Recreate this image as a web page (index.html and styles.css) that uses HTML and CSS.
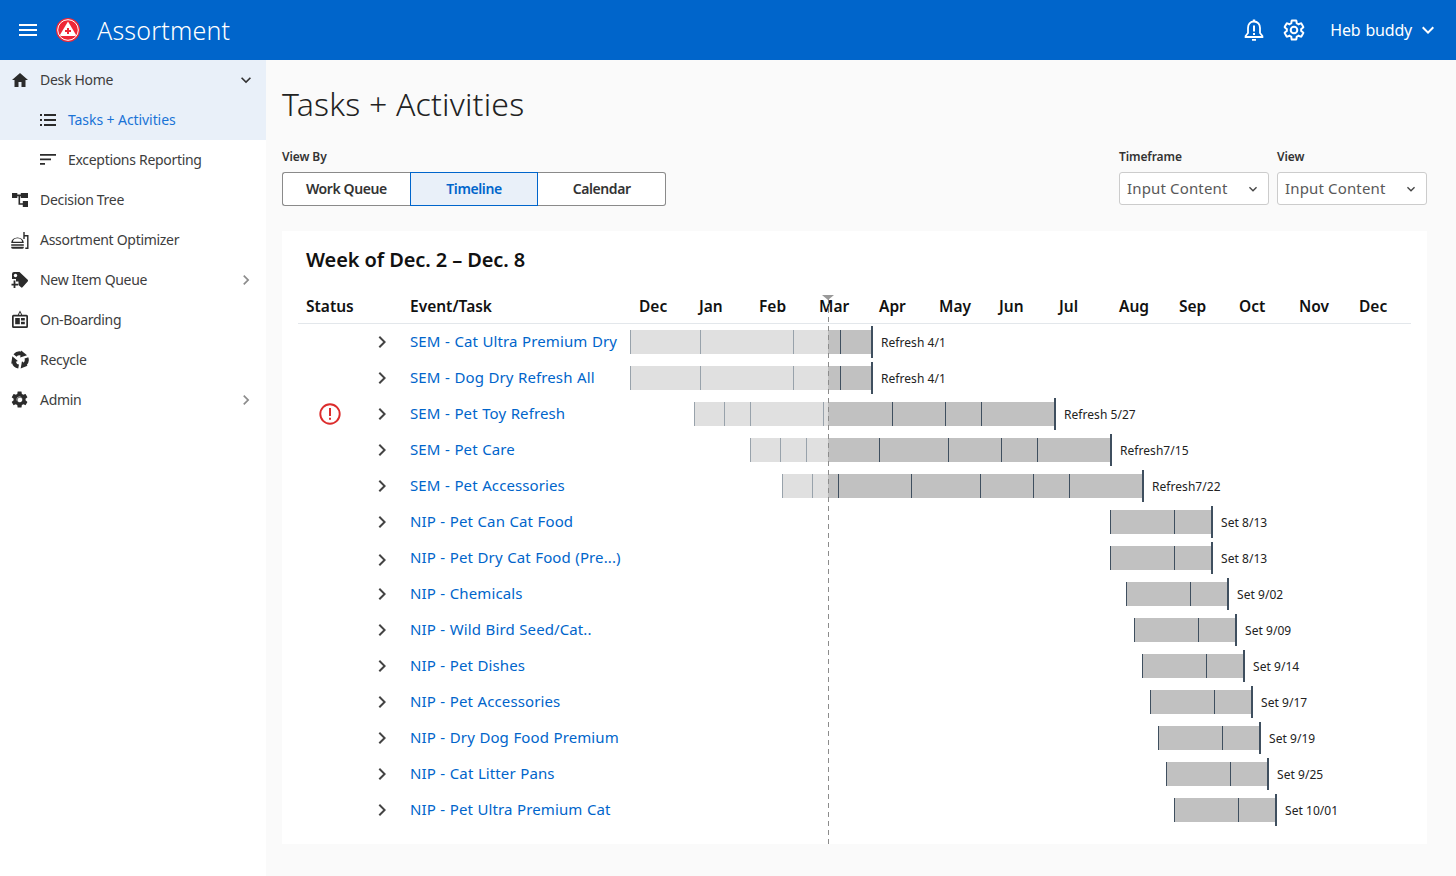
FILE: index.html
```html
<!DOCTYPE html>
<html>
<head>
  <title>Assortment</title>
  <link rel="stylesheet" href="styles.css">
</head>
<body>
  <svg class="defs" width="0" height="0">
    <symbol id="chev-right" viewBox="0 0 24 24"><path d="M10 6L8.59 7.41 13.17 12l-4.58 4.59L10 18l6-6z"/></symbol>
    <symbol id="chev-down" viewBox="0 0 24 24"><path d="M16.59 8.59L12 13.17 7.41 8.59 6 10l6 6 6-6z"/></symbol>
    <symbol id="cog" viewBox="0 0 24 24"><path d="M19.14 12.94c.04-.3.06-.61.06-.94 0-.32-.02-.64-.07-.94l2.03-1.58c.18-.14.23-.41.12-.61l-1.92-3.32c-.12-.22-.37-.29-.59-.22l-2.39.96c-.5-.38-1.03-.7-1.62-.94l-.36-2.54c-.04-.24-.24-.41-.48-.41h-3.84c-.24 0-.43.17-.47.41l-.36 2.54c-.59.24-1.13.57-1.62.94l-2.39-.96c-.22-.08-.47 0-.59.22L2.74 8.87c-.12.21-.08.47.12.61l2.03 1.58c-.05.3-.09.63-.09.94s.02.64.07.94l-2.03 1.58c-.18.14-.23.41-.12.61l1.92 3.32c.12.22.37.29.59.22l2.39-.96c.5.38 1.03.7 1.62.94l.36 2.54c.05.24.24.41.48.41h3.84c.24 0 .44-.17.47-.41l.36-2.54c.59-.24 1.13-.56 1.62-.94l2.39.96c.22.08.47 0 .59-.22l1.92-3.32c.12-.22.07-.47-.12-.61l-2.01-1.58zM12 15.6c-1.98 0-3.6-1.62-3.6-3.6s1.62-3.6 3.6-3.6 3.6 1.62 3.6 3.6-1.62 3.6-3.6 3.6z"/></symbol>
  </svg>

  <header class="topbar">
    <svg class="menu-icon" viewBox="0 0 18 12"><path d="M0 0h18v2H0zM0 5h18v2H0zM0 10h18v2H0z"/></svg>
    <svg class="logo" viewBox="0 0 24 24">
      <circle cx="12" cy="12" r="12" fill="#ee2737"/>
      <circle cx="12" cy="12" r="10.300" fill="none" stroke="#fff" stroke-width="1"/>
      <path d="M12 3.500L19.800 16.500Q20.300 18 18.800 18H5.200Q3.700 18 4.200 16.500z" fill="#fff"/>
      <path d="M11 10h2v2h2v2h-2v2h-2v-2H9v-2h2z" fill="#ee2737"/>
    </svg>
    <span class="app-name">Assortment</span>
    <div class="topbar-right">
      <svg class="bell" viewBox="0 0 20 24">
        <path d="M10 3.500c-3.800 0-6 3-6 6.500v5L1.600 18v1h16.800v-1L16 15v-5c0-3.500-2.200-6.500-6-6.500z" fill="none" stroke="#fff" stroke-width="1.800"/>
        <path d="M8.800 1.500h2.400v2.500H8.800zM9 7.500h2v6H9zM9 15h2v2H9zM8 21h4v1.800H8z" fill="#fff"/>
      </svg>
      <svg class="gear" viewBox="0 0 24 24">
        <path d="M19.140 12.940c.04-.3.060-.61.060-.94 0-.32-.02-.64-.07-.94l2.030-1.580c.18-.14.23-.41.12-.61l-1.920-3.320c-.12-.22-.37-.29-.59-.22l-2.390.96c-.5-.38-1.030-.7-1.620-.94l-.36-2.540c-.04-.24-.24-.41-.48-.41h-3.840c-.24 0-.43.17-.47.41l-.36 2.540c-.59.24-1.130.57-1.620.94l-2.390-.96c-.22-.08-.47 0-.59.22L2.740 8.870c-.12.21-.08.47.12.61l2.030 1.580c-.05.3-.09.63-.09.94s.02.64.07.94l-2.030 1.580c-.18.14-.23.41-.12.61l1.920 3.320c.12.22.37.29.59.22l2.390-.96c.5.38 1.030.7 1.620.94l.36 2.540c.05.24.24.41.48.41h3.840c.24 0 .44-.17.47-.41l.36-2.540c.59-.24 1.130-.56 1.620-.94l2.390.96c.22.08.47 0 .59-.22l1.920-3.320c.12-.22.07-.47-.12-.61z" fill="none" stroke="#fff" stroke-width="2"/>
        <circle cx="12" cy="12" r="3.300" fill="none" stroke="#fff" stroke-width="2"/>
      </svg>
      <span class="user-name">Heb buddy</span>
      <svg class="user-chev"><use href="#chev-down"/></svg>
    </div>
  </header>

  <div class="layout">
    <nav class="sidebar">
      <div class="nav-item open">
        <svg class="nav-icon" viewBox="0 0 20 20"><path d="M8.500 17v-5h3v5h4v-7H18L10 3 2 10h2.500v7z"/></svg>
        <span>Desk Home</span>
        <svg class="nav-chev dark"><use href="#chev-down"/></svg>
      </div>
      <div class="nav-item sub active">
        <svg class="nav-icon" viewBox="0 0 16 12"><path d="M0 0h2v2H0zM4 0h12v2H4zM0 5h2v2H0zM4 5h12v2H4zM0 10h2v2H0zM4 10h12v2H4z"/></svg>
        <span>Tasks + Activities</span>
      </div>
      <div class="nav-item sub">
        <svg class="nav-icon" viewBox="0 0 16 12"><path d="M0 0h16v1.700H0zM0 4.500h11v1.700H0zM0 9h5v1.700H0z"/></svg>
        <span>Exceptions Reporting</span>
      </div>
      <div class="nav-item">
        <svg class="nav-icon" viewBox="0 0 20 20"><path d="M2 3h5.300v5H2zM10.800 3H18v5h-7.200zM12.800 11H18v6h-5.200zM7 4.600h4v1.600H7zM8.500 5h1.600v8.200h3v1.600H8.500z"/></svg>
        <span>Decision Tree</span>
      </div>
      <div class="nav-item">
        <svg class="nav-icon" viewBox="0 0 20 20">
          <path d="M1.200 13a6.300 5.500 0 0 1 12.600 0zM1.200 14.300h12.600v1.400H1.200zM1.200 16.800h12.600a1.600 1.600 0 0 1-1.600 2H2.800a1.600 1.600 0 0 1-1.600-2z"/>
          <path d="M13.300 2h1.400v3H18.500v14h-3.200v-1.400h1.800V6.400h-2.400V9h-1.400z"/>
          <path d="M3 11.700a4.500 3.500 0 0 1 9 0z" fill="#fff"/>
        </svg>
        <span>Assortment Optimizer</span>
      </div>
      <div class="nav-item">
        <svg class="nav-icon" viewBox="0 0 20 20">
          <path d="M2 4Q2 2 4 2H9.500L17.700 9.800Q18.400 10.600 17.700 11.400L12.500 17.300Q11.800 18 11 17.300L8.500 15V11.500H6V9H2z"/>
          <circle cx="5.500" cy="5.500" r="1.700" fill="#fff"/>
          <path d="M3.600 10.500h1.800v3.200h2.800v1.800H5.400V18H3.600v-2.500H1.500v-1.800h2.100z"/>
        </svg>
        <span>New Item Queue</span>
        <svg class="nav-chev"><use href="#chev-right"/></svg>
      </div>
      <div class="nav-item">
        <svg class="nav-icon" viewBox="0 0 20 20">
          <path d="M3.500 4.800h4.300L10 .5l2.200 4.300h4.300A1.500 1.500 0 0 1 18 6.300v10.200a1.500 1.500 0 0 1-1.500 1.500h-13A1.500 1.500 0 0 1 2 16.500V6.300a1.500 1.500 0 0 1 1.500-1.500zM3.700 6.500v9.800h12.600V6.500zM8.800 4.800h2.400L10 2.600z" fill-rule="evenodd"/>
          <path d="M5.200 8h4.600v6.300H5.200zM11 8h3.800v2.600H11zM11 11.800h3.800v2.500H11z"/>
        </svg>
        <span>On-Boarding</span>
      </div>
      <div class="nav-item">
        <svg class="nav-icon recycle" viewBox="0 0 20 20">
          <g id="arrow">
            <path d="M5 5.500A6 6 0 0 1 11.500 3.700" fill="none" stroke="#2b2b2b" stroke-width="4"/>
            <path d="M11.200 .6L17 5.200 10.200 7.600z"/>
          </g>
          <use href="#arrow" transform="rotate(120 10 10)"/>
          <use href="#arrow" transform="rotate(240 10 10)"/>
        </svg>
        <span>Recycle</span>
      </div>
      <div class="nav-item">
        <svg class="nav-icon" viewBox="0.500 0.500 23 23">
          <use href="#cog"/>
          <circle cx="12" cy="12" r="3.300" fill="none" stroke="#2b2b2b" stroke-width="0.800"/>
        </svg>
        <span>Admin</span>
        <svg class="nav-chev"><use href="#chev-right"/></svg>
      </div>
    </nav>

    <main class="main">
      <h1 class="page-title">Tasks + Activities</h1>

      <div class="controls">
        <div class="field">
          <label class="field-label">View By</label>
          <div class="segmented">
            <button class="seg-btn">Work Queue</button>
            <button class="seg-btn selected">Timeline</button>
            <button class="seg-btn">Calendar</button>
          </div>
        </div>
        <div class="filters">
          <div class="field">
            <label class="field-label">Timeframe</label>
            <div class="select"><span>Input Content</span><svg class="select-chev"><use href="#chev-down"/></svg></div>
          </div>
          <div class="field">
            <label class="field-label">View</label>
            <div class="select"><span>Input Content</span><svg class="select-chev"><use href="#chev-down"/></svg></div>
          </div>
        </div>
      </div>

      <section class="card">
        <h2 class="week">Week of Dec. 2 – Dec. 8</h2>
        <div class="today"></div>

        <div class="row head">
          <div class="status-head">Status</div>
          <div class="name">Event/Task</div>
          <div class="months">
            <span>Dec</span><span>Jan</span><span>Feb</span><span>Mar</span><span>Apr</span><span>May</span><span>Jun</span><span>Jul</span><span>Aug</span><span>Sep</span><span>Oct</span><span>Nov</span><span>Dec</span>
          </div>
        </div>

        <div class="row">
          <div></div>
          <svg class="expand"><use href="#chev-right"/></svg>
          <a class="name">SEM - Cat Ultra Premium Dry</a>
          <div class="track">
            <div class="bar" style="margin-left:0">
              <i class="past" style="width:70px"></i><i class="past" style="width:93px"></i><i class="past" style="width:35px"></i><i class="now" style="width:12px"></i><i style="width:31px"></i>
            </div>
            <b class="end"></b><span class="tag">Refresh 4/1</span>
          </div>
        </div>
        <div class="row">
          <div></div>
          <svg class="expand"><use href="#chev-right"/></svg>
          <a class="name">SEM - Dog Dry Refresh All</a>
          <div class="track">
            <div class="bar" style="margin-left:0">
              <i class="past" style="width:70px"></i><i class="past" style="width:93px"></i><i class="past" style="width:35px"></i><i class="now" style="width:12px"></i><i style="width:31px"></i>
            </div>
            <b class="end"></b><span class="tag">Refresh 4/1</span>
          </div>
        </div>
        <div class="row">
          <svg class="alert" viewBox="0 0 22 22">
            <circle cx="11" cy="11" r="9.700" fill="none" stroke="#dc2c2c" stroke-width="1.900"/>
            <path d="M10 5h2v8h-2zM10 14.700h2v2h-2z" fill="#dc2c2c"/>
          </svg>
          <svg class="expand"><use href="#chev-right"/></svg>
          <a class="name">SEM - Pet Toy Refresh</a>
          <div class="track">
            <div class="bar" style="margin-left:64px">
              <i class="past" style="width:30px"></i><i class="past" style="width:26px"></i><i class="past" style="width:73px"></i><i class="past" style="width:5px"></i><i class="now" style="width:64px"></i><i style="width:53px"></i><i style="width:36px"></i><i style="width:73px"></i>
            </div>
            <b class="end"></b><span class="tag">Refresh 5/27</span>
          </div>
        </div>
        <div class="row">
          <div></div>
          <svg class="expand"><use href="#chev-right"/></svg>
          <a class="name">SEM - Pet Care</a>
          <div class="track">
            <div class="bar" style="margin-left:120px">
              <i class="past" style="width:30px"></i><i class="past" style="width:26px"></i><i class="past" style="width:22px"></i><i class="now" style="width:51px"></i><i style="width:69px"></i><i style="width:53px"></i><i style="width:36px"></i><i style="width:73px"></i>
            </div>
            <b class="end"></b><span class="tag">Refresh7/15</span>
          </div>
        </div>
        <div class="row">
          <div></div>
          <svg class="expand"><use href="#chev-right"/></svg>
          <a class="name">SEM - Pet Accessories</a>
          <div class="track">
            <div class="bar" style="margin-left:152px">
              <i class="past" style="width:30px"></i><i class="past" style="width:16px"></i><i class="now" style="width:10px"></i><i style="width:73px"></i><i style="width:69px"></i><i style="width:53px"></i><i style="width:36px"></i><i style="width:73px"></i>
            </div>
            <b class="end"></b><span class="tag">Refresh7/22</span>
          </div>
        </div>
        <div class="row">
          <div></div>
          <svg class="expand"><use href="#chev-right"/></svg>
          <a class="name">NIP - Pet Can Cat Food</a>
          <div class="track">
            <div class="bar" style="margin-left:480px"><i style="width:64px"></i><i style="width:37px"></i></div>
            <b class="end"></b><span class="tag">Set 8/13</span>
          </div>
        </div>
        <div class="row">
          <div></div>
          <svg class="expand low"><use href="#chev-right"/></svg>
          <a class="name">NIP - Pet Dry Cat Food (Pre...)</a>
          <div class="track">
            <div class="bar" style="margin-left:480px"><i style="width:64px"></i><i style="width:37px"></i></div>
            <b class="end"></b><span class="tag">Set 8/13</span>
          </div>
        </div>
        <div class="row">
          <div></div>
          <svg class="expand"><use href="#chev-right"/></svg>
          <a class="name">NIP - Chemicals</a>
          <div class="track">
            <div class="bar" style="margin-left:496px"><i style="width:64px"></i><i style="width:37px"></i></div>
            <b class="end"></b><span class="tag">Set 9/02</span>
          </div>
        </div>
        <div class="row">
          <div></div>
          <svg class="expand"><use href="#chev-right"/></svg>
          <a class="name">NIP - Wild Bird Seed/Cat..</a>
          <div class="track">
            <div class="bar" style="margin-left:504px"><i style="width:64px"></i><i style="width:37px"></i></div>
            <b class="end"></b><span class="tag">Set 9/09</span>
          </div>
        </div>
        <div class="row">
          <div></div>
          <svg class="expand"><use href="#chev-right"/></svg>
          <a class="name">NIP - Pet Dishes</a>
          <div class="track">
            <div class="bar" style="margin-left:512px"><i style="width:64px"></i><i style="width:37px"></i></div>
            <b class="end"></b><span class="tag">Set 9/14</span>
          </div>
        </div>
        <div class="row">
          <div></div>
          <svg class="expand"><use href="#chev-right"/></svg>
          <a class="name">NIP - Pet Accessories</a>
          <div class="track">
            <div class="bar" style="margin-left:520px"><i style="width:64px"></i><i style="width:37px"></i></div>
            <b class="end"></b><span class="tag">Set 9/17</span>
          </div>
        </div>
        <div class="row">
          <div></div>
          <svg class="expand"><use href="#chev-right"/></svg>
          <a class="name">NIP - Dry Dog Food Premium</a>
          <div class="track">
            <div class="bar" style="margin-left:528px"><i style="width:64px"></i><i style="width:37px"></i></div>
            <b class="end"></b><span class="tag">Set 9/19</span>
          </div>
        </div>
        <div class="row">
          <div></div>
          <svg class="expand"><use href="#chev-right"/></svg>
          <a class="name">NIP - Cat Litter Pans</a>
          <div class="track">
            <div class="bar" style="margin-left:536px"><i style="width:64px"></i><i style="width:37px"></i></div>
            <b class="end"></b><span class="tag">Set 9/25</span>
          </div>
        </div>
        <div class="row">
          <div></div>
          <svg class="expand"><use href="#chev-right"/></svg>
          <a class="name">NIP - Pet Ultra Premium Cat</a>
          <div class="track">
            <div class="bar" style="margin-left:544px"><i style="width:64px"></i><i style="width:37px"></i></div>
            <b class="end"></b><span class="tag">Set 10/01</span>
          </div>
        </div>
      </section>
    </main>
  </div>
</body>
</html>
```

FILE: styles.css
```css
* {
  box-sizing: border-box;
}
body {
  margin: 0;
  font-family: "Noto Sans", Arial, sans-serif;
  color: #333;
  background-color: #fafafa;
}
.defs {
  position: absolute;
}

/* top bar */
.topbar {
  height: 60px;
  background-color: #0065cb;
  display: flex;
  align-items: center;
  padding-left: 19px;
  color: #fff;
}
.menu-icon {
  width: 18px;
  height: 12px;
  fill: #fff;
}
.logo {
  width: 24px;
  height: 24px;
  margin-left: 19px;
}
.app-name {
  margin-left: 17px;
  font-size: 25px;
  font-weight: 300;
  letter-spacing: 0.2px;
}
.topbar-right {
  margin-left: auto;
  display: flex;
  align-items: center;
}
.bell {
  width: 20px;
  height: 24px;
}
.gear {
  width: 24px;
  height: 24px;
  margin-left: 18px;
}
.user-name {
  margin-left: 24px;
  font-size: 16px;
  letter-spacing: -0.2px;
  word-spacing: 1px;
}
.user-chev {
  width: 24px;
  height: 24px;
  margin: 0 16px 0 4px;
  fill: #fff;
}

/* side nav */
.layout {
  display: flex;
}
.sidebar {
  width: 266px;
  flex-shrink: 0;
  min-height: 816px;
  background-color: #fff;
}
.nav-item {
  height: 40px;
  display: flex;
  align-items: center;
  padding-left: 10px;
  font-size: 14px;
  letter-spacing: -0.3px;
  color: #3d3d3d;
}
.nav-item span {
  margin-top: -2px;
}
.nav-item.open,
.nav-item.active {
  background-color: #e9f0f9;
}
.nav-item.active {
  color: #1a73d6;
  letter-spacing: -0.08px;
}
.nav-icon {
  width: 20px;
  height: 20px;
  margin-right: 10px;
  fill: #2b2b2b;
}
.nav-item.sub {
  padding-left: 40px;
}
.nav-item.sub .nav-icon {
  width: 16px;
  height: 12px;
  margin-right: 12px;
}
.nav-chev {
  width: 20px;
  height: 20px;
  margin-left: auto;
  margin-right: 10px;
  fill: #8c8c8c;
}
.nav-chev.dark {
  fill: #333;
}

/* main area */
.main {
  flex: 1;
  padding: 25px 29px 32px 16px;
}
.page-title {
  margin: 0;
  font-size: 32px;
  line-height: 38px;
  font-weight: 300;
  letter-spacing: 0.2px;
  color: #222;
}
.controls {
  display: flex;
  justify-content: space-between;
  margin-top: 26px;
}
.filters {
  display: flex;
  gap: 8px;
}
.field-label {
  display: block;
  font-size: 12px;
  line-height: 16px;
  font-weight: 600;
  letter-spacing: -0.1px;
  color: #333;
  margin-bottom: 7px;
}
.segmented {
  display: flex;
  width: 384px;
  height: 34px;
}
.seg-btn {
  flex: 1;
  font-family: inherit;
  font-size: 14px;
  font-weight: 600;
  letter-spacing: -0.4px;
  color: #333;
  background-color: #fff;
  border: 1px solid #8a8a8a;
  padding: 0 0 2px;
}
.seg-btn:first-child {
  border-radius: 3px 0 0 3px;
  border-right: none;
}
.seg-btn:last-child {
  border-radius: 0 3px 3px 0;
  border-left: none;
}
.seg-btn.selected {
  background-color: #e9f0f9;
  color: #0065cb;
  border-color: #0065cb;
}
.select {
  width: 150px;
  height: 33px;
  display: flex;
  align-items: center;
  justify-content: space-between;
  padding: 0 7px;
  font-size: 15px;
  letter-spacing: 0.15px;
  color: #595959;
  background-color: #fff;
  border: 1px solid #ccc;
  border-radius: 3px;
}
.select span {
  margin-top: -2px;
}
.select-chev {
  width: 16px;
  height: 16px;
  fill: #444;
}

/* timeline card */
.card {
  position: relative;
  margin-top: 25px;
  padding: 15px 16px 16px;
  background-color: #fff;
}
.week {
  margin: 0 0 15px 8px;
  font-size: 20px;
  line-height: 28px;
  font-weight: 600;
  letter-spacing: -0.1px;
  color: #111;
}
.today {
  position: absolute;
  left: 546px;
  top: 68px;
  bottom: 0;
  width: 1px;
  background-image: repeating-linear-gradient(#8c8c8c 0 5px, transparent 5px 9px);
}
.today::before {
  content: "";
  position: absolute;
  left: -6px;
  top: -4px;
  border-left: 6px solid transparent;
  border-right: 6px solid transparent;
  border-top: 5px solid #999;
}
.row {
  display: grid;
  grid-template-columns: 72px 40px 220px 1fr;
  align-items: center;
  height: 36px;
}
.row.head {
  height: 35px;
  padding-bottom: 1px;
  border-bottom: 1px solid #e3e7eb;
  font-size: 15.5px;
  font-weight: 600;
  color: #111;
}
.status-head {
  grid-column: 1 / 3;
  padding-left: 8px;
}
.months {
  display: flex;
}
.months span {
  width: 60px;
  padding-left: 9px;
}
.name {
  white-space: nowrap;
}
a.name {
  margin-top: -2px;
  font-size: 15px;
  letter-spacing: 0.1px;
  word-spacing: 0.5px;
  color: #0065cb;
}
.alert {
  width: 22px;
  height: 22px;
  margin-left: 21px;
}
.expand {
  width: 24px;
  height: 24px;
  fill: #444;
}
.expand.low {
  margin-top: 3px;
}
.track {
  display: flex;
  align-items: center;
  height: 36px;
}
.bar {
  display: flex;
  height: 24px;
}
.bar i {
  height: 24px;
  background-color: #c1c1c1;
  border-left: 1px solid #3f4f5f;
}
.bar i.past {
  background-color: #e0e0e0;
  border-left-color: #98a2ab;
}
.bar i.now {
  border-left: none;
}
.end {
  width: 2px;
  height: 32px;
  background-color: #3f4f5f;
}
.tag {
  margin-left: 8px;
  font-size: 12px;
  letter-spacing: 0.05px;
  color: #222;
  white-space: nowrap;
}
```
